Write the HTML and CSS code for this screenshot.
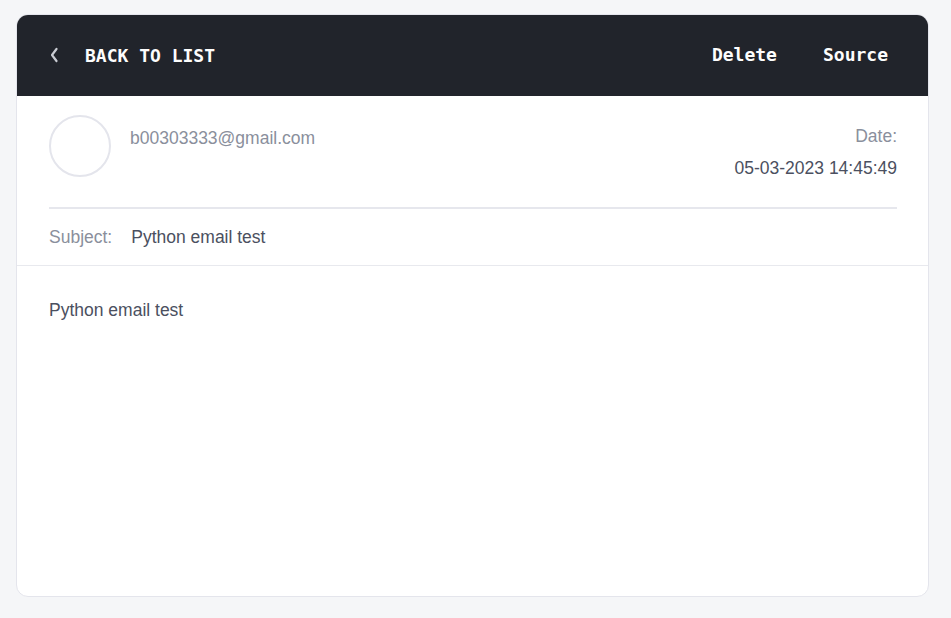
FILE: index.html
```html
<!DOCTYPE html>
<html>
<head>
<meta charset="utf-8">
<link rel="stylesheet" href="styles.css">
</head>
<body>
<div class="card">
  <div class="topbar">
    <a class="back">
      <svg class="chev" width="10" height="16" viewBox="0 0 10 16"><path d="M7.5 2 L3 8 L7.5 14" fill="none" stroke="#c9ccd3" stroke-width="2.2" stroke-linecap="round" stroke-linejoin="round"/></svg>
      <span>BACK TO LIST</span>
    </a>
    <div class="actions">
      <a>Delete</a>
      <a>Source</a>
    </div>
  </div>
  <div class="head">
    <div class="from">
      <div class="avatar"></div>
      <div class="email">b00303333@gmail.com</div>
    </div>
    <div class="date">
      <div class="date-label">Date:</div>
      <div class="date-value">05-03-2023 14:45:49</div>
    </div>
  </div>
  <div class="subject">
    <span class="subject-label">Subject:</span>
    <span class="subject-value">Python email test</span>
  </div>
  <div class="body">Python email test</div>
</div>
</body>
</html>
```
FILE: styles.css
```css
html, body { margin: 0; padding: 0; }
body {
  background: #f5f6f8;
  font-family: "Liberation Sans", Arial, sans-serif;
  padding: 14px 22px 21px 16px;
  box-sizing: border-box;
  height: 618px;
}
.card {
  height: 583px;
  box-sizing: border-box;
  background: #fff;
  border: 1px solid #e4e5ec;
  border-radius: 12px;
  overflow: hidden;
  display: flex;
  flex-direction: column;
}
.topbar {
  background: #21242b;
  height: 81px;
  flex: none;
  display: flex;
  align-items: center;
  justify-content: space-between;
  padding: 0 40px 0 32px;
  font-family: "DejaVu Sans Mono", monospace;
  font-weight: bold;
  font-size: 18px;
  color: #fdfdfd;
}
.back { display: flex; align-items: center; gap: 26px; margin-top: -1px; }
.chev { display: block; }
.actions { display: flex; gap: 46px; margin-left: -2px; margin-top: -2px; }
.head {
  display: flex;
  justify-content: space-between;
  margin: 0 31px 0 32px;
  padding: 19px 0 29px;
  border-bottom: 2px solid #e6e7ed;
}
.from { display: flex; gap: 19px; }
.avatar {
  width: 58px; height: 58px;
  border: 2px solid #e4e5ec;
  border-radius: 50%;
}
.email {
  font-size: 17.5px;
  color: #8a8f9c;
  line-height: 20px;
  margin-top: 13px;
}
.date { text-align: right; font-size: 17.5px; line-height: 20px; padding-top: 11px; }
.date-label { color: #8a8f9c; }
.date-value { color: #4b5060; margin-top: 12px; }
.subject {
  padding: 17px 32px 17px;
  border-bottom: 1px solid #e8e9ee;
  font-size: 17.5px;
  line-height: 22px;
  display: flex;
  gap: 19px;
}
.subject-label { color: #8a8f9c; }
.subject-value { color: #4b5060; }
.body {
  padding: 33px 32px;
  font-size: 17.5px;
  line-height: 22px;
  color: #4b5060;
}
```
